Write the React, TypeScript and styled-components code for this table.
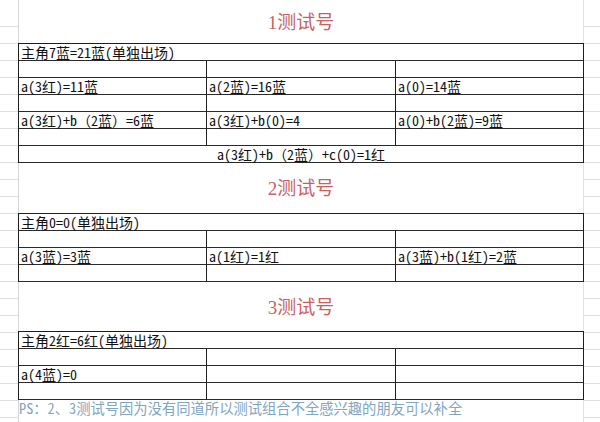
import React from 'react';
import styled, { createGlobalStyle } from 'styled-components';

const GlobalStyle = createGlobalStyle`
  html, body {
    margin: 0;
    padding: 0;
    background: #ffffff;
  }
  body {
    font-family: "Noto Sans Mono CJK SC", "Liberation Serif", "Noto Sans CJK SC", serif;
  }
`;

const ROW = 17;

const Sheet = styled.div`
  display: flex;
  width: 600px;
  height: 422px;
  overflow: hidden;
  background: #ffffff;
`;

const Gutter = styled.div<{ $w: number }>`
  flex: 0 0 ${(p) => p.$w}px;
  background-image: repeating-linear-gradient(
    180deg,
    transparent 0,
    transparent ${ROW - 1}px,
    #dedede ${ROW - 1}px,
    #dedede ${ROW}px
  );
  background-position: 0 10px;
`;

const Main = styled.div`
  flex: 0 0 566px;
  display: flex;
  flex-direction: column;
  background: linear-gradient(
    to right,
    #d6d6d6 0,
    #d6d6d6 1px,
    #ffffff 1px,
    #ffffff calc(100% - 1px),
    #e2e2e2 calc(100% - 1px)
  );
`;

const TitleRow = styled.div<{ $h: number }>`
  height: ${(p) => p.$h}px;
  display: flex;
  align-items: center;
  justify-content: center;
  padding-bottom: 4px;
  box-sizing: border-box;
  font-family: "Liberation Serif", "Noto Sans CJK SC", serif;
  font-size: 19px;
  color: #c95f5f;
`;

const Table = styled.div`
  display: grid;
  grid-template-columns: 188px 189px 188px;
  border-top: 1px solid #1e1e1e;
  border-left: 1px solid #1e1e1e;
  margin-top: -1px;
`;

const Cell = styled.div<{ $span?: boolean; $center?: boolean }>`
  grid-column: ${(p) => (p.$span ? '1 / -1' : 'auto')};
  height: ${ROW}px;
  box-sizing: border-box;
  border-right: 1px solid #1e1e1e;
  border-bottom: 1px solid #2a2a2a;
  padding: 0 2px;
  font-size: 14px;
  line-height: 16px;
  color: #111111;
  white-space: nowrap;
  overflow: visible;
  text-align: ${(p) => (p.$center ? 'center' : 'left')};
`;

const Note = styled.div`
  height: ${ROW}px;
  padding-left: 1px;
  font-size: 14.3px;
  line-height: 16px;
  color: #7fa6c1;
  white-space: nowrap;
`;

type Row = { merged: string; center?: boolean } | { cells: [string, string, string] };

type Section = { title: string; titleH: number; rows: Row[] };

const blank: Row = { cells: ['', '', ''] };

const sections: Section[] = [
  {
    title: '1测试号',
    titleH: 44,
    rows: [
      { merged: '主角7蓝=21蓝(单独出场)' },
      blank,
      { cells: ['a(3红)=11蓝', 'a(2蓝)=16蓝', 'a(0)=14蓝'] },
      blank,
      { cells: ['a(3红)+b（2蓝）=6蓝', 'a(3红)+b(0)=4', 'a(0)+b(2蓝)=9蓝'] },
      blank,
      { merged: 'a(3红)+b（2蓝）+c(0)=1红', center: true },
    ],
  },
  {
    title: '2测试号',
    titleH: 51,
    rows: [
      { merged: '主角0=0(单独出场)' },
      blank,
      { cells: ['a(3蓝)=3蓝', 'a(1红)=1红', 'a(3蓝)+b(1红)=2蓝'] },
      blank,
    ],
  },
  {
    title: '3测试号',
    titleH: 50,
    rows: [
      { merged: '主角2红=6红(单独出场)' },
      blank,
      { cells: ['a(4蓝)=0', '', ''] },
      blank,
    ],
  },
];

const App: React.FC = () => {
  return (
    <>
      <GlobalStyle />
      <Sheet>
        <Gutter $w={18} />
        <Main>
          {sections.map((s) => (
            <React.Fragment key={s.title}>
              <TitleRow $h={s.titleH}>{s.title}</TitleRow>
              <Table>
                {s.rows.map((r, i) =>
                  'merged' in r ? (
                    <Cell key={i} $span $center={r.center}>
                      {r.merged}
                    </Cell>
                  ) : (
                    r.cells.map((c, j) => <Cell key={`${i}-${j}`}>{c}</Cell>)
                  )
                )}
              </Table>
            </React.Fragment>
          ))}
          <Note>PS：2、3测试号因为没有同道所以测试组合不全感兴趣的朋友可以补全</Note>
        </Main>
        <Gutter $w={16} />
      </Sheet>
    </>
  );
};

export default App;
